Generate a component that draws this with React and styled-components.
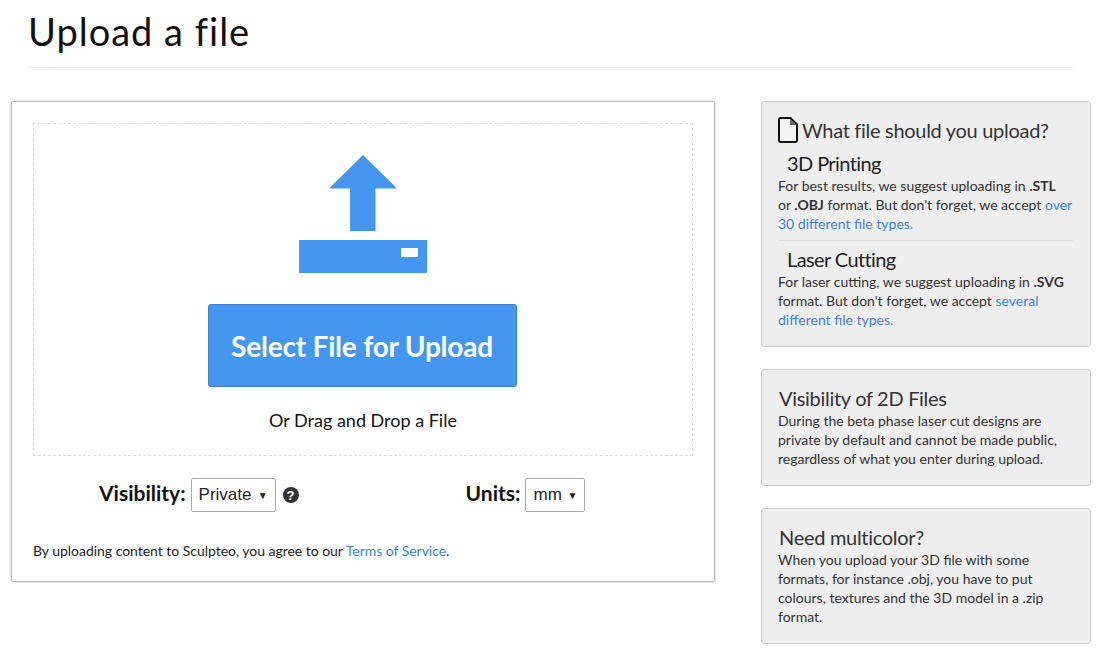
import React from 'react';
import styled, { createGlobalStyle } from 'styled-components';

const GlobalStyle = createGlobalStyle`
  html, body {
    margin: 0;
    padding: 0;
    background: #fff;
  }
  body {
    font-family: Lato, "Open Sans", sans-serif;
    color: #333;
  }
`;

const App = () => (
  <Page>
    <GlobalStyle />
    <Header>
      <Title>Upload a file</Title>
    </Header>
    <Content>
      <UploadCard>
        <DropZone>
          <UploadIcon viewBox="0 0 128 120">
            <path d="M64 1 L98 34.5 L76.5 34.5 L76.5 77 L51 77 L51 34.5 L30 34.5 Z" fill="#4496ee" />
            <path fillRule="evenodd" d="M0 86 H128 V119 H0 Z M102 94 V103 H119 V94 Z" fill="#4496ee" />
          </UploadIcon>
          <SelectButton type="button">Select File for Upload</SelectButton>
          <DropHint>Or Drag and Drop a File</DropHint>
        </DropZone>
        <Options>
          <VisibilityField>
            <FieldLabel>Visibility:</FieldLabel>
            <FakeSelect $width={85}>
              Private
              <Caret>▼</Caret>
            </FakeSelect>
            <HelpIcon>?</HelpIcon>
          </VisibilityField>
          <UnitsField>
            <FieldLabel>Units:</FieldLabel>
            <FakeSelect $width={60}>
              mm
              <Caret>▼</Caret>
            </FakeSelect>
          </UnitsField>
        </Options>
        <Terms>
          By uploading content to Sculpteo, you agree to our <TextLink href="#">Terms of Service</TextLink>.
        </Terms>
      </UploadCard>
      <Sidebar>
        <InfoPanel>
          <FileHeading>
            <FileIcon viewBox="0 0 20 26">
              <path
                d="M1 2.5 A1.5 1.5 0 0 1 2.5 1 H12.5 L19 7.5 V23.5 A1.5 1.5 0 0 1 17.5 25 H2.5 A1.5 1.5 0 0 1 1 23.5 Z"
                fill="#f4f4f4"
                stroke="#111"
                strokeWidth="2"
              />
              <path d="M12 1.5 V8 H18.5 Z" fill="#666" />
            </FileIcon>
            What file should you upload?
          </FileHeading>
          <SubHeading>3D Printing</SubHeading>
          <PanelText>
            For best results, we suggest uploading in <strong>.STL</strong> or <strong>.OBJ</strong> format. But don't forget, we accept <TextLink href="#">over 30 different file types.</TextLink>
          </PanelText>
          <Divider />
          <SubHeading>Laser Cutting</SubHeading>
          <PanelText>
            For laser cutting, we suggest uploading in <strong>.SVG</strong> format. But don't forget, we accept <TextLink href="#">several different file types.</TextLink>
          </PanelText>
        </InfoPanel>
        <InfoPanel>
          <PanelHeading>Visibility of 2D Files</PanelHeading>
          <PanelText>
            During the beta phase laser cut designs are private by default and cannot be made public, regardless of what you enter during upload.
          </PanelText>
        </InfoPanel>
        <InfoPanel>
          <PanelHeading>Need multicolor?</PanelHeading>
          <PanelText>
            When you upload your 3D file with some formats, for instance .obj, you have to put colours, textures and the 3D model in a .zip format.
          </PanelText>
        </InfoPanel>
      </Sidebar>
    </Content>
  </Page>
);

const Page = styled.div`
  padding: 0 15px 12px 11px;
  width: 1080px;
`;
const Header = styled.header`
  border-bottom: 1px solid #eee;
  height: 67px;
  margin: 0 17px 33px;
`;
const Title = styled.h1`
  color: #111;
  font-size: 38px;
  font-weight: 400;
  letter-spacing: 1px;
  line-height: 62px;
  margin: 0;
`;
const Content = styled.main`
  align-items: flex-start;
  display: flex;
  justify-content: space-between;
`;
const UploadCard = styled.section`
  border: 1px solid #bbb;
  border-radius: 2px;
  box-shadow: 0 0 2px rgba(0, 0, 0, 0.35);
  box-sizing: border-box;
  height: 481px;
  padding: 21px;
  width: 704px;
`;
const DropZone = styled.div`
  align-items: center;
  border: 1px dashed #ddd;
  box-sizing: border-box;
  display: flex;
  flex-direction: column;
  height: 333px;
  padding-top: 30px;
`;
const UploadIcon = styled.svg`
  display: block;
  height: 120px;
  width: 128px;
`;
const SelectButton = styled.button`
  background: #4496ee;
  border: 1px solid #3a80cc;
  border-radius: 3px;
  color: #fff;
  font-family: Lato, sans-serif;
  font-size: 28px;
  font-weight: 700;
  height: 83px;
  letter-spacing: -0.2px;
  margin: 30px 2px 0 0;
  padding: 0;
  width: 309px;
`;
const DropHint = styled.p`
  color: #111;
  font-size: 18px;
  line-height: 24px;
  margin: 21px 0 0;
`;
const Options = styled.div`
  align-items: center;
  display: flex;
  height: 34px;
  margin-top: 22px;
`;
const VisibilityField = styled.div`
  align-items: center;
  display: flex;
  margin-left: 66px;
`;
const UnitsField = styled.div`
  align-items: center;
  display: flex;
  margin-left: 167px;
`;
const FieldLabel = styled.span`
  color: #111;
  font-size: 21px;
  font-weight: 700;
  line-height: 30px;
  margin: -4px 5px 0 0;
`;
const FakeSelect = styled.div`
  align-items: center;
  border: 1px solid #aaa;
  border-radius: 2px;
  box-sizing: border-box;
  color: #222;
  display: flex;
  font-family: "Liberation Sans", Arial, sans-serif;
  font-size: 17px;
  height: 34px;
  justify-content: space-between;
  padding: 0 7px;
  width: ${({ $width }) => $width}px;
`;
const Caret = styled.span`
  font-size: 10px;
`;
const HelpIcon = styled.span`
  align-items: center;
  background: #333;
  border-radius: 50%;
  color: #fff;
  display: flex;
  font-family: "Liberation Sans", Arial, sans-serif;
  font-size: 13px;
  font-weight: 700;
  height: 16px;
  justify-content: center;
  margin-left: 7px;
  width: 16px;
`;
const Terms = styled.p`
  color: #222;
  font-size: 14px;
  letter-spacing: -0.03px;
  line-height: 20px;
  margin: 29px 0 0;
`;
const TextLink = styled.a`
  color: #3d85d8;
  text-decoration: none;
`;
const Sidebar = styled.aside`
  display: flex;
  flex-direction: column;
  gap: 22px;
  width: 330px;
`;
const InfoPanel = styled.div`
  background: #eee;
  border: 1px solid #ccc;
  border-radius: 3px;
  box-sizing: border-box;
  padding: 16px 17px 17px;
`;
const PanelHeading = styled.h3`
  align-items: center;
  color: #333;
  display: flex;
  font-size: 20px;
  font-weight: 400;
  gap: 4px;
  letter-spacing: -0.3px;
  line-height: 24px;
  margin: 0 0 1px;
`;
const FileHeading = styled(PanelHeading)`
  margin: -1px 0 0 -1px;
  padding-bottom: 2px;
`;
const FileIcon = styled.svg`
  display: block;
  flex: none;
  height: 26px;
  width: 20px;
`;
const SubHeading = styled.h4`
  color: #222;
  font-size: 20px;
  font-weight: 400;
  letter-spacing: -0.6px;
  line-height: 22px;
  margin: 7px 0 2px 8px;
`;
const PanelText = styled.p`
  color: #333;
  font-size: 14px;
  line-height: 19px;
  margin: 0 1px 0 -1px;
`;
const Divider = styled.hr`
  border: 0;
  border-top: 1px solid #ddd;
  margin: 7px 0 0;
`;

export default App;
